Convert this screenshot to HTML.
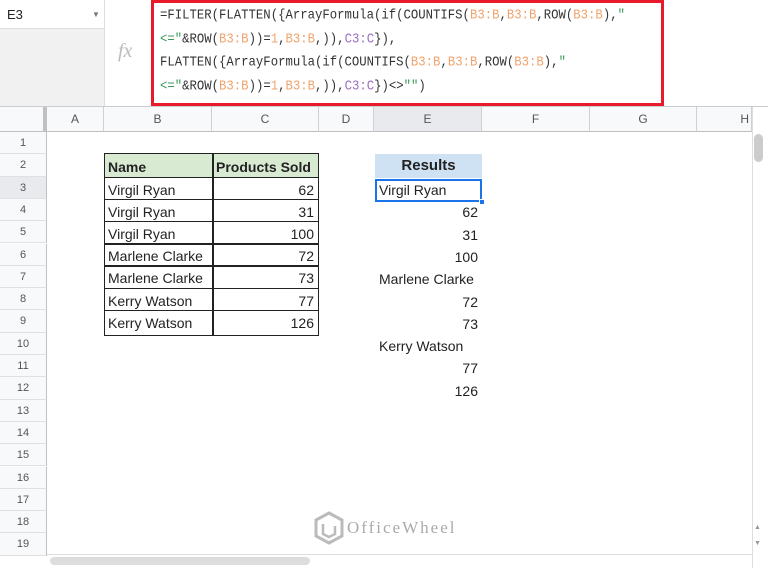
<!DOCTYPE html>
<html><head><style>
*{margin:0;padding:0;box-sizing:border-box}
body{width:768px;height:568px;overflow:hidden;background:#fff;font-family:"Liberation Sans",Arial,sans-serif;position:relative}
.a{position:absolute}
.f{font-family:"Liberation Mono",monospace;font-size:12.3px;color:#333;position:absolute;left:160px;white-space:pre;transform:scaleY(1.15);transform-origin:0 50%}
.o{color:#f0a36c}.p{color:#9b6fbf}.g{color:#3a9a5a}
.ch{position:absolute;top:107px;height:25px;border-right:1px solid #d0d0d0;border-bottom:1px solid #c0c0c0;background:#f8f9fa;color:#555;font-size:12px;text-align:center;line-height:25px}
.rh{position:absolute;left:0;width:47px;border-bottom:1px solid #e0e0e0;background:#f8f9fa;color:#555;font-size:11px;text-align:center;border-right:1px solid #c0c0c0}
.c{position:absolute;font-size:14px;color:#222;line-height:22px;white-space:nowrap}
</style></head><body>
<div class="a" style="left:0;top:0;width:105px;height:29px;border-right:1px solid #ddd;border-bottom:1px solid #ddd;font-size:13px;line-height:29px;padding-left:7px;color:#222">E3<span style="position:absolute;left:92px;font-size:8px;color:#777">▼</span></div>
<div class="a" style="left:0;top:29px;width:105px;height:78px;background:#f1f1f1;border-right:1px solid #ddd"></div>
<div class="a" style="left:118px;top:40px;font-family:'Liberation Serif',serif;font-style:italic;font-size:20px;color:#bbb">fx</div>
<div class="a" style="left:151px;top:0;width:513px;height:106px;border:3px solid #e81b2a"></div>
<div class="a" style="left:0;top:106px;width:768px;height:1px;background:#ccc"></div>
<div class="f" style="top:8px">=FILTER(FLATTEN({ArrayFormula(if(COUNTIFS(<span class="o">B3:B</span>,<span class="o">B3:B</span>,ROW(<span class="o">B3:B</span>),<span class="g">"</span></div>
<div class="f" style="top:32px"><span class="g">&lt;="</span>&amp;ROW(<span class="o">B3:B</span>))=<span class="o">1</span>,<span class="o">B3:B</span>,)),<span class="p">C3:C</span>}),</div>
<div class="f" style="top:55px">FLATTEN({ArrayFormula(if(COUNTIFS(<span class="o">B3:B</span>,<span class="o">B3:B</span>,ROW(<span class="o">B3:B</span>),<span class="g">"</span></div>
<div class="f" style="top:79px"><span class="g">&lt;="</span>&amp;ROW(<span class="o">B3:B</span>))=<span class="o">1</span>,<span class="o">B3:B</span>,)),<span class="p">C3:C</span>})&lt;&gt;<span class="g">""</span>)</div>

<div class="ch" style="left:0;width:47px;border-right:4px solid #c0c0c0"></div>
<div class="ch" style="left:47px;width:57px">A</div>
<div class="ch" style="left:104px;width:108px">B</div>
<div class="ch" style="left:212px;width:107px">C</div>
<div class="ch" style="left:319px;width:55px">D</div>
<div class="ch" style="left:374px;width:108px;background:#e8eaed">E</div>
<div class="ch" style="left:482px;width:108px">F</div>
<div class="ch" style="left:590px;width:107px">G</div>
<div class="ch" style="left:697px;width:55px;text-align:right;padding-right:2px">H</div>
<div class="a" style="left:752px;top:107px;width:16px;height:461px;background:#fff;border-left:1px solid #ddd"></div>
<div class="a" style="left:754px;top:134px;width:9px;height:28px;background:#ccc;border-radius:5px"></div>
<div class="a" style="left:754px;top:524px;font-size:7px;color:#999">▲</div>
<div class="a" style="left:754px;top:540px;font-size:7px;color:#999">▼</div>

<div id="rows"></div>
<script>
var h='';for(var i=1;i<=19;i++){var t=132+(i-1)*22.3;h+='<div class="rh" style="top:'+t+'px;height:22.3px;line-height:22px;'+(i==3?'background:#e8eaed':'')+'">'+i+'</div>';}
document.getElementById('rows').innerHTML=h;
</script>

<div class="a" style="left:105px;top:154px;width:213px;height:24px;background:#d9ead3"></div>
<div class="a" style="left:104px;top:153px;width:215px;height:183px;border:1.5px solid #222"></div>
<div class="a" style="left:212px;top:153px;width:1.5px;height:183px;background:#222"></div>
<script>
for(var k=0;k<=6;k++){var y=177+k*22.1;document.write('<div class="a" style="left:104px;top:'+y+'px;width:215px;height:1.3px;background:#222"></div>');}
</script>
<div class="c" style="left:108px;top:156px;font-weight:bold">Name</div>
<div class="c" style="left:216px;top:156px;font-weight:bold">Products Sold</div>
<script>
var d=[["Virgil Ryan",62],["Virgil Ryan",31],["Virgil Ryan",100],["Marlene Clarke",72],["Marlene Clarke",73],["Kerry Watson",77],["Kerry Watson",126]];
for(var k=0;k<7;k++){var y=179+k*22.1;document.write('<div class="c" style="left:108px;top:'+y+'px">'+d[k][0]+'</div><div class="c" style="left:212px;width:102px;text-align:right;top:'+y+'px">'+d[k][1]+'</div>');}
</script>

<div class="a" style="left:375px;top:154px;width:107px;height:24px;background:#cfe2f3"></div>
<div class="c" style="left:375px;width:107px;text-align:center;top:155px;font-weight:bold;font-size:15px">Results</div>
<div class="a" style="left:375px;top:179px;width:107px;height:23px;border:2px solid #1a73e8"></div>
<div class="a" style="left:479px;top:199px;width:6px;height:6px;background:#1a73e8;border:1px solid #fff"></div>
<script>
var r=[["Virgil Ryan",0],["62",1],["31",1],["100",1],["Marlene Clarke",0],["72",1],["73",1],["Kerry Watson",0],["77",1],["126",1]];
for(var k=0;k<10;k++){var y=179+k*22.3;document.write(r[k][1]?'<div class="c" style="left:375px;width:103px;text-align:right;top:'+y+'px">'+r[k][0]+'</div>':'<div class="c" style="left:379px;top:'+y+'px">'+r[k][0]+'</div>');}
</script>

<svg class="a" style="left:313px;top:510px" width="32" height="36" viewBox="0 0 32 36"><path d="M16 3 L29 10 L29 26 L16 33 L3 26 L3 10 Z" fill="none" stroke="#bbb" stroke-width="3"/><path d="M10 14 L10 24 L16 27 L22 24 L22 16" fill="none" stroke="#bbb" stroke-width="2.5"/></svg>
<div class="a" style="left:347px;top:518px;font-family:'Liberation Serif',serif;font-size:17px;letter-spacing:2px;color:#aaa">OfficeWheel</div>

<div class="a" style="left:47px;top:554px;width:705px;height:14px;background:#fff;border-top:1px solid #ddd"></div>
<div class="a" style="left:50px;top:557px;width:260px;height:8px;background:#ddd;border-radius:4px"></div>
</body></html>
